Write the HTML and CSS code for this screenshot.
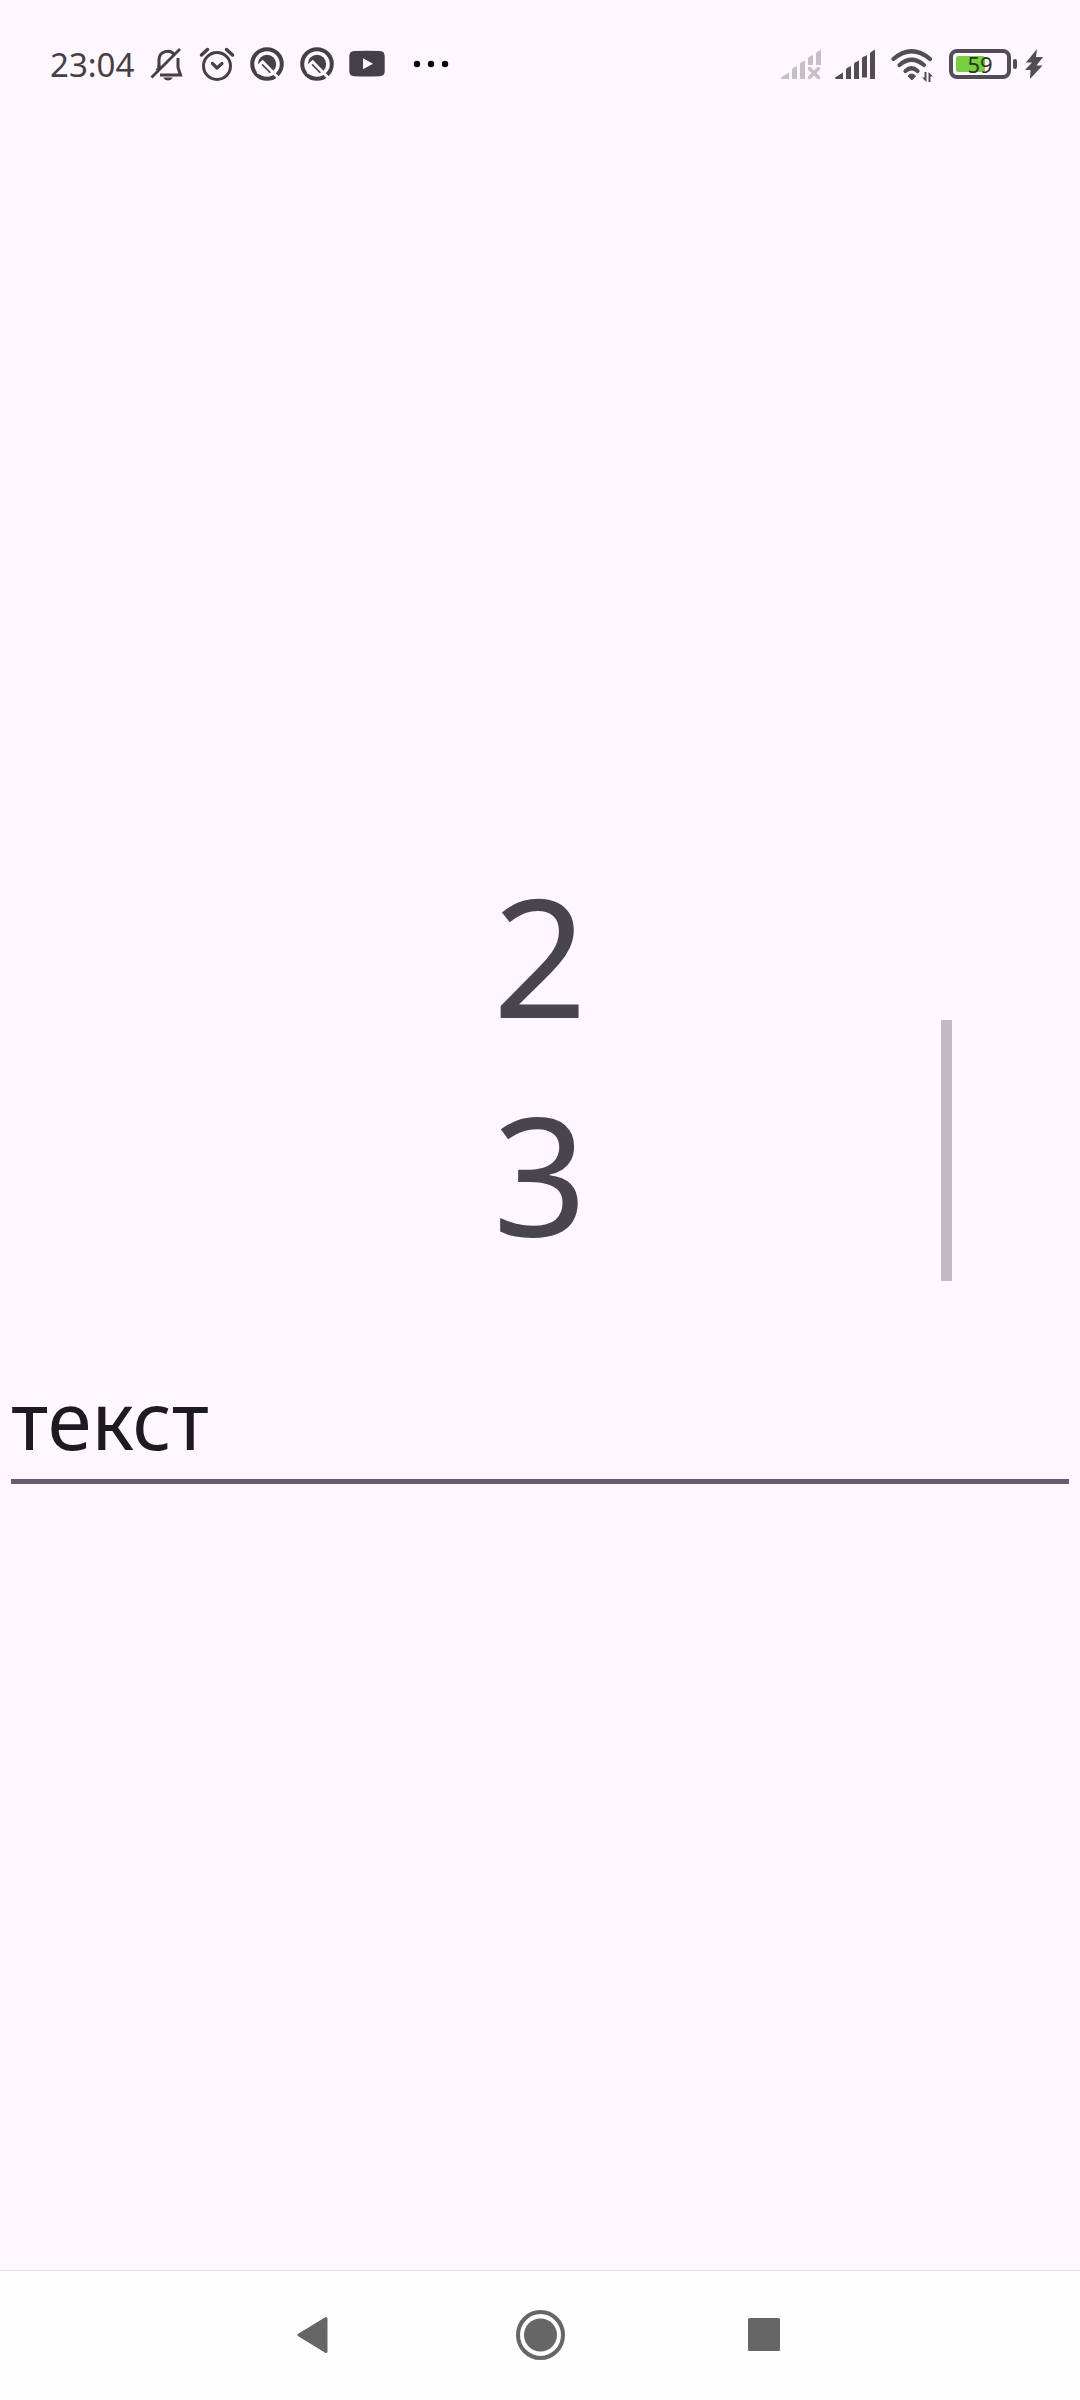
FILE: index.html
```html
<!DOCTYPE html>
<html lang="ru">
<head>
<meta charset="utf-8">
<meta name="viewport" content="width=device-width, initial-scale=1">
<title>Список</title>
<link rel="stylesheet" href="styles.css">
</head>
<body>
<div class="screen">
  <header class="status">
    <div class="status-group">
      <time class="clock">23:04</time>
      <svg class="icon" viewBox="0 0 36 36" aria-hidden="true">
        <g fill="none" stroke="currentColor" stroke-width="3">
          <path d="M10 21V13.500a8.500 8.500 0 0 1 15.500-4.500M29 12V21.500L31.500 29H11"/>
          <path d="M3.500 30.500L30 4" stroke-linecap="square" stroke-width="2.800"/>
          <path d="M10 19v2.500L8 24.500"/>
        </g>
        <path d="M14 31.500h10q-2 3-5 3t-5-3z" fill="currentColor"/>
      </svg>
      <svg class="icon" viewBox="0 0 36 36" fill="none" stroke="currentColor" stroke-linecap="round" aria-hidden="true">
        <circle cx="18" cy="20" r="13.500" stroke-width="3"/>
        <path d="M13.500 17.500l4.500 4.500 5-4.500" stroke-width="3.200" stroke-linejoin="round"/>
        <path d="M2.500 9L8.500 3.500M27.500 3.500L33.500 9" stroke-width="3.500"/>
      </svg>
      <svg class="icon" viewBox="0 0 36 36" aria-hidden="true">
        <circle cx="18" cy="18" r="14.800" fill="none" stroke="currentColor" stroke-width="4"/>
        <circle cx="18" cy="18" r="9.200" fill="currentColor"/>
        <path d="M7 20.500l1 7 7 2 5.500-2.500-8-8-3-1z" fill="#fef7ff"/>
        <path d="M8.500 20.500l5.200-4.700L30.500 33" fill="none" stroke="#fef7ff" stroke-width="3"/>
      </svg>
      <svg class="icon" viewBox="0 0 36 36" aria-hidden="true">
        <circle cx="18" cy="18" r="14.800" fill="none" stroke="currentColor" stroke-width="4"/>
        <circle cx="18" cy="18" r="9.200" fill="currentColor"/>
        <path d="M7 20.500l1 7 7 2 5.500-2.500-8-8-3-1z" fill="#fef7ff"/>
        <path d="M8.500 20.500l5.200-4.700L30.500 33" fill="none" stroke="#fef7ff" stroke-width="3"/>
      </svg>
      <svg class="icon" viewBox="0 0 36 36" aria-hidden="true">
        <path d="M5 5Q18 4.500 31 5Q35.500 5.200 35.700 10V25.500Q35.500 30 31 30.200Q18 30.800 5 30.200Q.5 30 .3 25.500V10Q.5 5.200 5 5z" fill="currentColor"/>
        <path d="M14 12.300v11l10-5.500z" fill="#fef7ff"/>
      </svg>
      <svg class="icon more" viewBox="0 0 36 36" aria-hidden="true">
        <circle cx="4" cy="18" r="3.200"/><circle cx="18" cy="18" r="3.200"/><circle cx="32" cy="18" r="3.200"/>
      </svg>
    </div>
    <div class="status-group status-right">
      <svg class="signal signal-off" viewBox="0 0 40 36" fill="currentColor" aria-hidden="true">
        <path d="M0 31.500l8-5v6.500H1.500Q0 33 0 31.500zM11 23.500q0-1 1-1.500l4-2v13h-5zM19 18q0-1 1-1.500l4-2v18.500h-5zM27 12.500q0-1 1-1.500l4-2v10h-5zM35 7.500q0-1 1-1.500l4-2.500v15.500h-5z"/>
        <path d="M28.500 22.500l9 9m0-9l-9 9" fill="none" stroke="currentColor" stroke-width="3.500" stroke-linecap="round"/>
      </svg>
      <svg class="signal" viewBox="0 0 40 36" fill="currentColor" aria-hidden="true">
        <path d="M0 31.500l8-5v6.500H1.500Q0 33 0 31.500zM11 23.500q0-1 1-1.500l4-2v13h-5zM19 18q0-1 1-1.500l4-2v18.500h-5zM27 12.500q0-1 1-1.500l4-2v22.500h-5zM35 7.500q0-1 1-1.500l4-2.500v29.500h-5z"/>
      </svg>
      <svg class="wifi" viewBox="0 0 42 36" aria-hidden="true">
        <g fill="none" stroke="currentColor" stroke-width="4.200" stroke-linecap="round">
          <path d="M2.500 13Q20.500-2.500 39 13"/>
          <path d="M8.500 19Q20.500 8.500 33 19"/>
          <path d="M14.500 25Q20.500 19.500 26.500 25"/>
        </g>
        <path d="M17 30q3.800-4 7.600 0L20.800 34z" fill="currentColor" stroke="currentColor" stroke-linejoin="round"/>
        <path d="M35.500 26v10l-4.500-4.500h2.500v-5.500zM37.500 36v-10l4.500 4.500h-2.500v5.500z" fill="currentColor"/>
      </svg>
      <div class="battery" role="img" aria-label="59%">
        <svg class="battery-shape" viewBox="0 0 70 36" aria-hidden="true">
          <rect x="2" y="5" width="58" height="26" rx="6" fill="none" stroke="currentColor" stroke-width="4"/>
          <rect x="7" y="10" width="29" height="16" rx="2.500" fill="#76cf3e"/>
          <rect x="64" y="13" width="4" height="10" rx="2" fill="currentColor"/>
        </svg>
        <span class="battery-level">59</span>
      </div>
      <svg class="bolt" viewBox="0 0 20 36" fill="currentColor" aria-hidden="true">
        <path d="M13 3L2 16.500h6L1 24h5.500L6 33 18.500 19.500H12.500L19 11h-7z"/>
      </svg>
    </div>
  </header>

  <main class="content">
    <div class="picker">
      <ul class="numbers">
        <li class="number">2</li>
        <li class="number">3</li>
      </ul>
      <div class="scrollbar"></div>
    </div>
    <input class="field" type="text" value="текст" aria-label="Текст">
  </main>

  <nav class="navbar">
    <button class="nav-button" type="button" aria-label="Назад">
      <svg class="nav-icon" viewBox="0 0 64 64" aria-hidden="true"><path d="M17 34L44 17.500V50.500L17 34z" fill="currentColor" stroke="currentColor" stroke-width="3" stroke-linejoin="round"/></svg>
    </button>
    <button class="nav-button" type="button" aria-label="Домой">
      <svg class="nav-icon" viewBox="0 0 64 64" aria-hidden="true"><ellipse cx="32.500" cy="34" rx="22.500" ry="23" fill="none" stroke="currentColor" stroke-width="4"/><circle cx="32.500" cy="34" r="16.500" fill="currentColor"/></svg>
    </button>
    <button class="nav-button" type="button" aria-label="Недавние">
      <svg class="nav-icon" viewBox="0 0 64 64" aria-hidden="true"><rect x="14" y="17" width="32" height="33" rx="1.500" fill="currentColor"/></svg>
    </button>
  </nav>
</div>
</body>
</html>
```
FILE: styles.css
```css
* { box-sizing: border-box; }

body {
  margin: 0;
  background: #fef7ff;
  font-family: "Noto Sans", "Open Sans", sans-serif;
}

.screen {
  display: flex;
  flex-direction: column;
  min-height: 100vh;
}

.status {
  display: flex;
  align-items: center;
  justify-content: space-between;
  height: 128px;
  padding: 0 36px 0 50px;
  color: #434046;
}

.status-group {
  display: flex;
  align-items: center;
  gap: 14px;
}

.clock {
  width: 85px;
  padding-top: 2px;
  font-size: 33px;
  line-height: 48px;
}

.icon {
  width: 36px;
  height: 36px;
}

.more {
  margin-left: 14px;
  fill: #000;
}

.status-right { color: #504d53; }

.signal {
  width: 40px;
  height: 36px;
}

.signal-off { color: #c5bfc8; }

.wifi {
  width: 42px;
  height: 36px;
  margin-left: 2px;
}

.battery {
  display: grid;
  align-items: center;
  width: 70px;
  margin-left: 2px;
}

.battery-shape,
.battery-level { grid-area: 1 / 1; }

.battery-shape {
  width: 70px;
  height: 36px;
}

.battery-level {
  width: 62px;
  color: #2b3326;
  font-size: 22px;
  line-height: 36px;
  text-align: center;
}

.bolt {
  width: 20px;
  height: 36px;
  margin-left: -9px;
}

.content {
  display: flex;
  flex: 1;
  flex-direction: column;
  padding: 717px 11px 0;
}

.picker {
  position: relative;
  margin: 0 117px;
}

.numbers {
  margin: 0;
  padding: 0;
  list-style: none;
}

.number {
  color: #49454f;
  font-size: 165px;
  line-height: 218px;
  text-align: center;
}

.scrollbar {
  position: absolute;
  right: 0;
  bottom: 0;
  width: 11px;
  height: 261px;
  background: #c1bcc2;
}

.field {
  width: 100%;
  height: 124px;
  margin-top: 79px;
  padding: 0 0 2px;
  border: 0;
  border-bottom: 5px solid #665b70;
  border-radius: 0;
  outline: 0;
  background: transparent;
  color: #1d1b20;
  font-family: inherit;
  font-size: 80px;
}

.navbar {
  display: flex;
  align-items: center;
  justify-content: center;
  gap: 98px;
  height: 130px;
  padding-bottom: 5px;
  border-top: 1px solid #e4e2e5;
  background: #fefefe;
}

.nav-button {
  display: flex;
  align-items: center;
  justify-content: center;
  width: 128px;
  height: 124px;
  padding: 0;
  border: 0;
  background: none;
  color: #666;
}

.nav-icon {
  width: 64px;
  height: 64px;
}
```
